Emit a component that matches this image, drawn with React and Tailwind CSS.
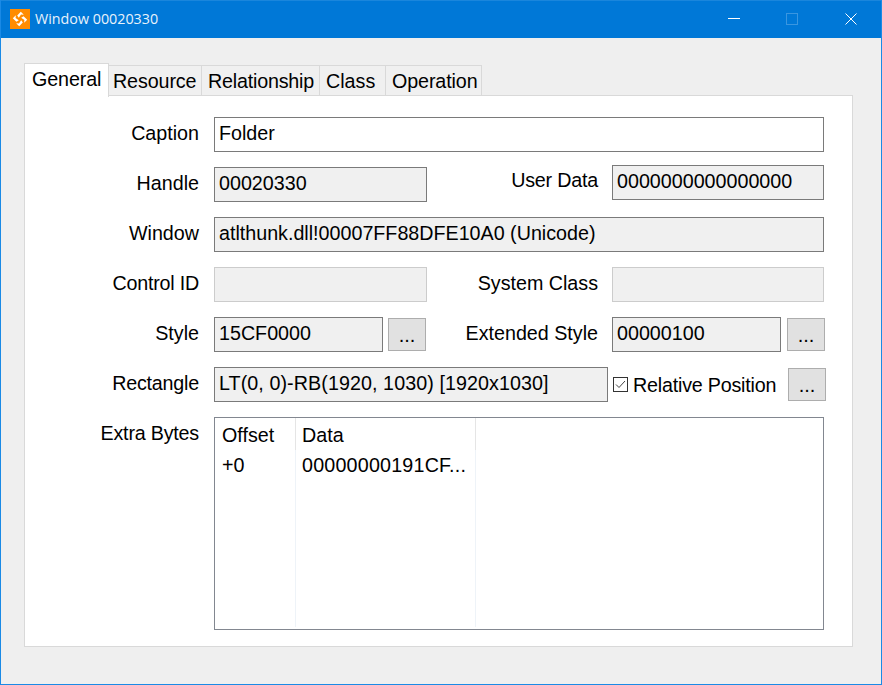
import React from 'react';

function Label({ children, className = 'w-[174px]' }) {
  return <div className={`${className} shrink-0 mt-[4px] text-right leading-[24px]`}>{children}</div>;
}

function Field({ value, className = '', disabled = false, white = false }) {
  return (
    <div
      className={`h-[35px] border pl-1 leading-[30px] whitespace-nowrap overflow-hidden ${
        disabled ? 'border-[#cccccc]' : 'border-[#7a7a7a]'
      } ${white ? 'bg-white' : 'bg-[#f0f0f0]'} ${className}`}
    >
      {value}
    </div>
  );
}

function DotsButton({ className = '' }) {
  return (
    <button className={`mt-px h-[33px] w-[38px] shrink-0 border border-[#adadad] bg-[#e1e1e1] text-[20px] leading-[28px] text-black ${className}`}>
      ...
    </button>
  );
}

const tabs = [
  { name: 'Resource', cls: 'w-[93px] pl-[4px] tracking-[-0.1px]' },
  { name: 'Relationship', cls: 'w-[118px] pl-[6px] tracking-[-0.2px]' },
  { name: 'Class', cls: 'w-[66px] pl-[6px]' },
  { name: 'Operation', cls: 'w-[96px] pl-[6px] tracking-[-0.1px]' },
];

const blade = 'M8.8 8.8 L7.2 6.4 L10.8 2.8 L13.8 5.8 L11 5.6 L10 7 Z';

export default function App() {
  return (
    <div className="h-[685px] w-[882px] flex flex-col overflow-hidden border border-t-0 border-[#1a8ae6] bg-[#efefef] text-[19.7px] text-black font-['Liberation_Sans',Arial,sans-serif]">
      {/* title bar */}
      <div className="h-[38px] shrink-0 -mx-px pb-px flex items-center bg-[#0078d7] border-t border-[#1a86dc] text-white">
        <svg className="ml-[10px] mr-[5px]" width="20" height="20" viewBox="0 0 20 20">
          <rect width="20" height="20" fill="#ff8c00" />
          <g fill="#fff">
            <path d={blade} />
            <path d={blade} transform="rotate(90 10 10)" />
            <path d={blade} transform="rotate(180 10 10)" />
            <path d={blade} transform="rotate(270 10 10)" />
          </g>
        </svg>
        <span className="text-[14.3px] font-['Open_Sans',sans-serif] text-[#e8f2fb]">Window 00020330</span>
        <div className="ml-auto flex items-center">
          <svg width="12" height="12" viewBox="0 0 12 12" className="mr-[46px]">
            <path d="M0 5.5H12" stroke="#fff" />
          </svg>
          <svg width="12" height="12" viewBox="0 0 12 12" className="mr-[47px]">
            <rect x="0.5" y="0.5" width="11" height="11" fill="none" stroke="#3a96e0" />
          </svg>
          <svg width="12" height="12" viewBox="0 0 12 12" className="mr-[25px]">
            <path d="M0.5 0.5L11.5 11.5M11.5 0.5L0.5 11.5" stroke="#fff" />
          </svg>
        </div>
      </div>

      <div className="ml-[23px] mt-[25px] w-[829px]">
        {/* tabs */}
        <div className="relative z-10 flex h-[33px] items-end">
          <div className="h-[34px] w-[85px] border border-b-0 border-[#d9d9d9] bg-white pl-[7px] leading-[30px] -mb-px tracking-[-0.1px]">General</div>
          {tabs.map((t) => (
            <div key={t.name} className={`${t.cls} h-[31px] border border-l-0 border-[#d9d9d9] bg-[#f0f0f0] leading-[31px]`}>
              {t.name}
            </div>
          ))}
        </div>

        {/* panel */}
        <div className="h-[552px] -mt-px border border-[#d9d9d9] bg-white pt-[21px]">
          <div className="flex items-start">
            <Label>Caption</Label>
            <Field value="Folder" white className="ml-[15px] w-[610px]" />
          </div>
          <div className="mt-[15px] flex items-start">
            <Label>Handle</Label>
            <Field value="00020330" className="ml-[15px] w-[213px]" />
            <Label className="w-[171px] !mt-px tracking-[-0.2px]">User Data</Label>
            <Field value="0000000000000000" className="-mt-[2px] ml-[14px] w-[212px]" />
          </div>
          <div className="mt-[15px] flex items-start">
            <Label>Window</Label>
            <Field value="atlthunk.dll!00007FF88DFE10A0 (Unicode)" className="ml-[15px] w-[610px]" />
          </div>
          <div className="mt-[15px] flex items-start">
            <Label className="w-[174px] tracking-[-0.2px]">Control ID</Label>
            <Field disabled value="" className="ml-[15px] w-[213px]" />
            <Label className="w-[171px]">System Class</Label>
            <Field disabled value="" className="ml-[14px] w-[212px]" />
          </div>
          <div className="mt-[15px] flex items-start">
            <Label>Style</Label>
            <Field value="15CF0000" className="ml-[15px] w-[169px]" />
            <DotsButton className="ml-[5px]" />
            <Label className="w-[172px]">Extended Style</Label>
            <Field value="00000100" className="ml-[14px] w-[169px]" />
            <DotsButton className="ml-[6px]" />
          </div>
          <div className="mt-[15px] flex items-start">
            <Label className="w-[174px] tracking-[-0.2px]">Rectangle</Label>
            <Field value="LT(0, 0)-RB(1920, 1030) [1920x1030]" className="ml-[15px] w-[394px] tracking-[0.08px]" />
            <svg className="ml-[5px] mt-[10px] shrink-0" width="15" height="15" viewBox="0 0 15 15">
              <rect x="0.5" y="0.5" width="14" height="14" fill="#fff" stroke="#333" />
              <path d="M3 7.5L6 10.5L12 4" fill="none" stroke="#444" />
            </svg>
            <span className="ml-[5px] mt-[6px] w-[155px] shrink-0 leading-[24px] tracking-[-0.2px] whitespace-nowrap">Relative Position</span>
            <DotsButton />
          </div>
          <div className="mt-[15px] flex items-start">
            <Label className="w-[174px] tracking-[-0.2px]">Extra Bytes</Label>
            <div className="ml-[15px] flex h-[213px] w-[610px] border border-[#828790] bg-white leading-[30px]">
              <div className="w-[81px]">
                <div className="h-[32px] border-r border-[#e5e5e5] pl-[7px] pt-[2px]">Offset</div>
                <div className="h-[177px] border-r border-[#eef3f8] pl-[7px]">+0</div>
              </div>
              <div className="w-[180px]">
                <div className="h-[32px] border-r border-[#e5e5e5] pl-[6px] pt-[2px]">Data</div>
                <div className="h-[177px] border-r border-[#eef3f8] pl-[6px] tracking-[0.2px]">00000000191CF...</div>
              </div>
            </div>
          </div>
        </div>
      </div>
    </div>
  );
}
